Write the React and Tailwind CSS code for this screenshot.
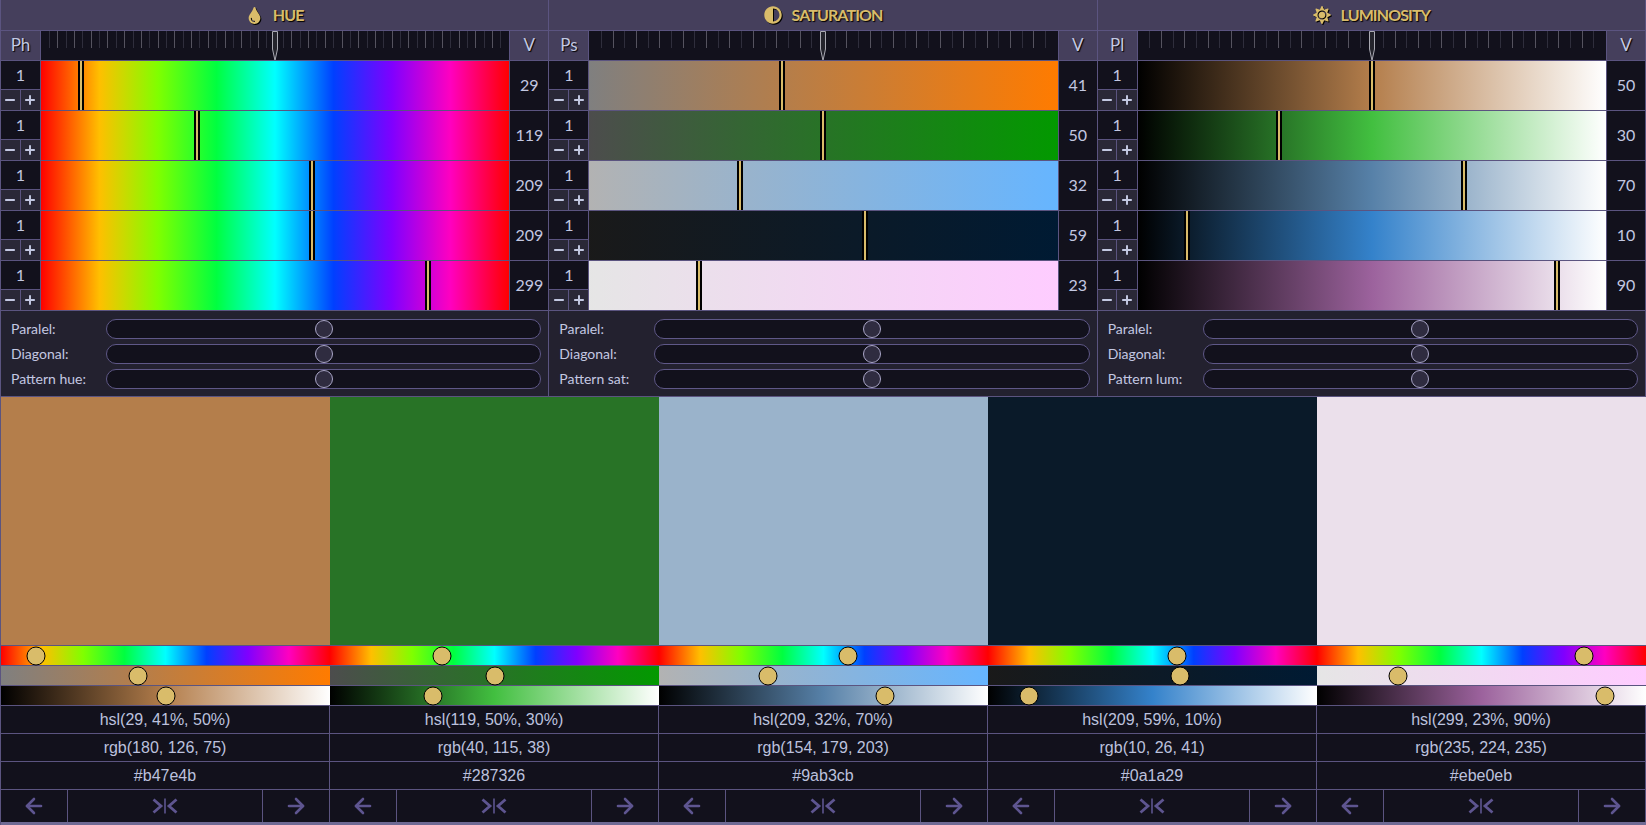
import { ArrowLeft, ArrowRight, Minus, Plus } from "lucide-react";
import { FaTint, FaAdjust, FaSun } from "react-icons/fa";

const colors = [
  { h: 29, s: 41, l: 50, rgb: "rgb(180, 126, 75)", hex: "#b47e4b" },
  { h: 119, s: 50, l: 30, rgb: "rgb(40, 115, 38)", hex: "#287326" },
  { h: 209, s: 32, l: 70, rgb: "rgb(154, 179, 203)", hex: "#9ab3cb" },
  { h: 209, s: 59, l: 10, rgb: "rgb(10, 26, 41)", hex: "#0a1a29" },
  { h: 299, s: 23, l: 90, rgb: "rgb(235, 224, 235)", hex: "#ebe0eb" },
];

const hueStops = [0, 45, 90, 135, 180, 225, 270, 315, 360].map((d) => `hsl(${d}, 100%, 50%)`).join(", ");
const gradients = {
  hue: () => `linear-gradient(to right, ${hueStops})`,
  sat: (c) => `linear-gradient(to right, hsl(${c.h}, 0%, ${c.l}%), hsl(${c.h}, 100%, ${c.l}%))`,
  lum: (c) => `linear-gradient(to right, #000, hsl(${c.h}, ${c.s}%, 50%), #fff)`,
};

const panels = [
  { key: "hue", field: "h", max: 360, title: "HUE", Icon: FaTint, phase: "Ph", pattern: "Pattern hue:", ticks: 55 },
  { key: "sat", field: "s", max: 100, title: "SATURATION", Icon: FaAdjust, phase: "Ps", pattern: "Pattern sat:", ticks: 39 },
  { key: "lum", field: "l", max: 100, title: "LUMINOSITY", Icon: FaSun, phase: "Pl", pattern: "Pattern lum:", ticks: 39 },
];

function Ruler({ count, dense }) {
  return (
    <div className="relative h-full bg-[#12111c] overflow-hidden">
      <div className={`flex justify-center h-[17px] ${dense ? "gap-[7.37px]" : "gap-[10.7px]"}`}>
        {Array.from({ length: count }).map((_, i) => (
          <span key={i} className={`w-px h-full shrink-0 ${(i - (count - 1) / 2) % 2 === 0 ? "bg-[#55535f]" : "bg-[#2f2e3c]"}`} />
        ))}
      </div>
      <svg className="absolute top-0 left-1/2 -translate-x-1/2" width="6" height="30" viewBox="0 0 6 30">
        <path d="M0.5 0.5H5.5V18L3 29.5L0.5 18Z" fill="#24242c" stroke="#a9a9b2" />
      </svg>
    </div>
  );
}

function ColorRow({ panel, color }) {
  const value = color[panel.field];
  return (
    <div className="grid grid-cols-[40px_1fr_39px] h-[50px] border-b border-[#5b5480]">
      <div className="flex flex-col border-r border-[#5b5480]">
        <div className="h-[29px] flex items-center justify-center border-b border-[#5b5480] bg-[#12111c]">1</div>
        <div className="flex-1 grid grid-cols-2 bg-[#2a2837]">
          <button className="flex items-center justify-center border-r border-[#5b5480]"><Minus size={14} strokeWidth={3.4} /></button>
          <button className="flex items-center justify-center"><Plus size={14} strokeWidth={3.4} /></button>
        </div>
      </div>
      <div className="relative" style={{ background: gradients[panel.key](color) }}>
        <div className="absolute inset-y-0 left-0 right-[6px]">
          <div
            className="absolute inset-y-0 w-[6px] bg-[#d9bc6a] border-x-2 border-black"
            style={{ left: `${(value / panel.max) * 100}%` }}
          />
        </div>
      </div>
      <div className="flex items-center justify-center pb-px border-l border-[#5b5480] bg-[#12111c]">{value}</div>
    </div>
  );
}

function Range({ label }) {
  return (
    <div className="flex items-center h-5 pr-[7px]">
      <span className="w-[105px] pl-[10px] shrink-0 text-sm">{label}</span>
      <div className="relative flex-1 h-5 rounded-full border border-[#5f5888] bg-[#12111c]">
        <div className="absolute top-1/2 left-1/2 -translate-x-1/2 -translate-y-1/2 w-[18px] h-[18px] rounded-full border-[1.5px] border-[#aaa6c8] bg-[#2f2c40]" />
      </div>
    </div>
  );
}

function Panel({ panel }) {
  const Icon = panel.Icon;
  return (
    <div className="flex flex-col border-r border-[#5b5480] text-[#c3c8e2] font-['Lato',sans-serif]">
      <div className="h-[31px] flex items-center justify-center gap-[10px] bg-[#453f5c] border-b border-[#5b5480] text-[#d9bc6a] font-bold text-base [text-shadow:1px_1px_1px_#000]">
        <Icon size={panel.key === "hue" ? 17 : 18} className="drop-shadow-[1px_1px_0_#000]" />
        <span className="tracking-[-0.9px]">{panel.title}</span>
      </div>
      <div className="grid grid-cols-[40px_1fr_39px] h-[30px] border-b border-[#5b5480]">
        <div className="flex items-center justify-center pb-px text-[17px] bg-[#453f5c] border-r border-[#5b5480] [text-shadow:1px_1px_1px_#000]">{panel.phase}</div>
        <Ruler count={panel.ticks} dense={panel.key === "hue"} />
        <div className="flex items-center justify-center pb-px text-[17px] bg-[#453f5c] border-l border-[#5b5480] [text-shadow:1px_1px_1px_#000]">V</div>
      </div>
      {colors.map((c, i) => (
        <ColorRow key={i} panel={panel} color={c} />
      ))}
      <div className="h-[86px] flex flex-col gap-[5px] pt-2 bg-[#23212f] border-b border-[#5b5480]">
        <Range label="Paralel:" />
        <Range label="Diagonal:" />
        <Range label={panel.pattern} />
      </div>
    </div>
  );
}

function Strip({ kind, value, max, color }) {
  return (
    <div className="relative h-5 border-b border-[#5b5480]" style={{ background: gradients[kind](color) }}>
      <div className="absolute inset-y-0 left-[10px] right-[10px]">
        <div
          className="absolute top-1/2 -translate-x-1/2 -translate-y-1/2 w-[19px] h-[19px] rounded-full bg-[#d9bc6a] border border-black"
          style={{ left: `${(value / max) * 100}%` }}
        />
      </div>
    </div>
  );
}

function TextRow({ children }) {
  return <div className="h-7 flex items-center justify-center border-b border-r border-[#5b5480] bg-[#12111c]">{children}</div>;
}

function Swatch({ color }) {
  return (
    <div className="flex flex-col text-[#bcc1de] font-['Liberation_Sans',sans-serif]">
      <div className="h-[248px]" style={{ background: color.hex }} />
      <div className="border-t border-[#5b5480]">
        <Strip kind="hue" value={color.h} max={360} color={color} />
        <Strip kind="sat" value={color.s} max={100} color={color} />
        <Strip kind="lum" value={color.l} max={100} color={color} />
      </div>
      <TextRow>{`hsl(${color.h}, ${color.s}%, ${color.l}%)`}</TextRow>
      <TextRow>{color.rgb}</TextRow>
      <TextRow>{color.hex}</TextRow>
      <div className="grid grid-cols-[67px_1fr_66px] h-8 border-r border-[#5b5480] bg-[#12111c] text-[#5e5590]">
        <button className="flex items-center justify-center border-r border-[#5b5480]"><ArrowLeft size={24} strokeWidth={2.6} /></button>
        <button className="flex items-center justify-center border-r border-[#5b5480]">
          <svg width="26" height="16" viewBox="0 0 26 16" fill="none" stroke="currentColor">
            <path d="M1.5 1.5L9 8L1.5 14.5M24.5 1.5L17 8L24.5 14.5" strokeWidth="2.8" />
            <path d="M13 0.5V15.5" strokeWidth="1.6" />
          </svg>
        </button>
        <button className="flex items-center justify-center pr-px"><ArrowRight size={24} strokeWidth={2.6} /></button>
      </div>
    </div>
  );
}

export default function App() {
  return (
    <div className="h-[825px] bg-[#6f6a94] overflow-hidden border-l border-[#5b5480]">
      <div className="grid grid-cols-3">
        {panels.map((p) => (
          <Panel key={p.key} panel={p} />
        ))}
      </div>
      <div className="grid grid-cols-5">
        {colors.map((c, i) => (
          <Swatch key={i} color={c} />
        ))}
      </div>
    </div>
  );
}
